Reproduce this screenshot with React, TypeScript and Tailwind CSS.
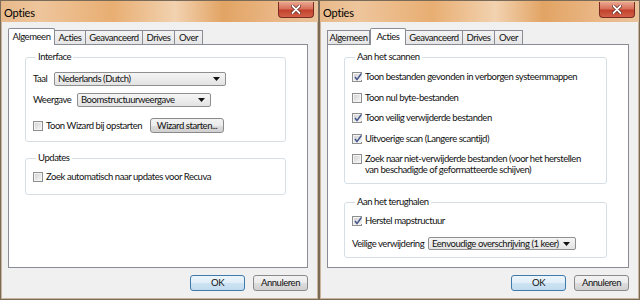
import React from "react";

function Check({ checked }: { checked?: boolean }) {
  return (
    <span className="w-[10px] h-[10px] shrink-0 border border-[#8e8f8f] bg-[#f4f4f4] p-px flex">
      <span className="flex-1 bg-[linear-gradient(135deg,#d4d4d4,#f4f4f4)] flex items-center justify-center">
        {checked && (
          <svg width="8" height="8" viewBox="0 0 8 8">
            <path d="M1 4 L3 6.6 L7.2 0.8" fill="none" stroke="#42548c" strokeWidth="1.5" />
          </svg>
        )}
      </span>
    </span>
  );
}

function Select({ value, className }: { value: string; className: string }) {
  return (
    <div
      className={`shrink-0 border border-[#8f8f8f] rounded-[2px] bg-[linear-gradient(#f5f5f5,#e3e3e3)] flex items-center justify-between pl-[3px] pr-[5px] ${className}`}
    >
      <span className="whitespace-nowrap">{value}</span>
      <svg width="7" height="4" viewBox="0 0 7 4">
        <path d="M0 0 H7 L3.5 4 Z" fill="#111" />
      </svg>
    </div>
  );
}

function Btn({ children, primary, className }: { children: React.ReactNode; primary?: boolean; className: string }) {
  return (
    <div
      className={`shrink-0 flex items-center justify-center rounded-[3px] border whitespace-nowrap ${
        primary
          ? "border-[#3d7bad] bg-[linear-gradient(#edf5fb_0%,#e1eef8_50%,#cde3f3_51%,#c2dbee_100%)]"
          : "border-[#8a8a8a] bg-[linear-gradient(#f3f3f3_0%,#ebebeb_50%,#dddddd_51%,#d0d0d0_100%)]"
      } ${className}`}
    >
      {children}
    </div>
  );
}

const tabBase: Record<string, string> = {
  Algemeen: "w-[43px]",
  Acties: "w-[32px]",
  Geavanceerd: "w-[58px]",
  Drives: "w-[33px]",
  Over: "w-[29px]",
};
const tabActive: Record<string, string> = {
  Algemeen: "w-[47px]",
  Acties: "w-[36px]",
  Geavanceerd: "w-[62px]",
  Drives: "w-[37px]",
  Over: "w-[33px]",
};

function Tabs({ active }: { active: string }) {
  return (
    <div className="h-[16px] flex items-end relative z-10">
      {Object.keys(tabBase).map((t) =>
        t === active ? (
          <div
            key={t}
            className={`${tabActive[t]} h-[17px] -mb-px bg-white border border-b-0 border-[#898c95] rounded-t-[2px] flex items-center justify-center pb-[1px]`}
          >
            {t}
          </div>
        ) : (
          <div
            key={t}
            className={`${tabBase[t]} h-[14px] bg-[linear-gradient(#f3f3f3,#e5e5e5)] border border-b-0 border-[#898c95] -ml-px first:ml-0 flex items-center justify-center`}
          >
            {t}
          </div>
        )
      )}
    </div>
  );
}

function Group({ label, children, className }: { label: string; children: React.ReactNode; className: string }) {
  return (
    <fieldset className={`border border-[#d5dfe5] rounded-[3px] px-[7px] ${className}`}>
      <legend className="ml-[3px] px-[2px] leading-[12px]">{label}</legend>
      {children}
    </fieldset>
  );
}

function Window({ active, children, className }: { active: string; children: React.ReactNode; className: string }) {
  return (
    <div
      className={`h-[300px] border border-[#7a6a58] flex flex-col bg-[linear-gradient(90deg,#e7b98a_0%,#eec59c_12%,#e8ae72_35%,#f2d2b0_55%,#e2a464_70%,#eab888_88%,#e9c39b_100%)] ${className}`}
    >
      <div className="h-[21px] shrink-0 relative flex items-center pl-[3px] pt-[3px] text-[11px] tracking-[-0.2px] text-black">
        Opties
        <div className="absolute right-[4px] top-[1px] w-[36px] h-[16px] rounded-b-[4px] border border-[#7a2a1e] border-t-0 bg-[linear-gradient(#e9a590_0%,#d8705a_45%,#c2422c_55%,#d2614a_100%)] flex items-center justify-center">
          <svg width="10" height="9" viewBox="0 0 10 9">
            <path d="M1.5 1 L8.5 8 M8.5 1 L1.5 8" stroke="#5a2018" strokeWidth="3.2" strokeLinecap="round" />
            <path d="M1.5 1 L8.5 8 M8.5 1 L1.5 8" stroke="#ffffff" strokeWidth="1.8" strokeLinecap="round" />
          </svg>
        </div>
      </div>
      <div className="flex-1 bg-[#f0f0f0] border border-[#c9b39a] border-t-0 flex flex-col pt-[6px] pl-[6px] pr-[9px] pb-[5px]">
        <Tabs active={active} />
        <div className="h-[224px] bg-white border border-[#898c95] flex flex-col pt-[6px] pl-[16px] pr-[21px]">
          {children}
        </div>
        <div className="mt-[7px] flex justify-end gap-[8px]">
          <Btn primary className="w-[55px] h-[16px]">OK</Btn>
          <Btn className="w-[55px] h-[16px]">Annuleren</Btn>
        </div>
      </div>
    </div>
  );
}

function Row({ checked, children, className }: { checked?: boolean; children: React.ReactNode; className?: string }) {
  return (
    <div className={`flex items-center gap-[3px] h-[12px] ${className ?? ""}`}>
      <Check checked={checked} />
      <span className="whitespace-nowrap">{children}</span>
    </div>
  );
}

export default function App() {
  return (
    <div className="w-[640px] h-[300px] flex bg-[#2a2a2a] font-['Lato',sans-serif] text-[9.5px] leading-[12px] tracking-[-0.45px] text-[#111]">
      <Window active="Algemeen" className="w-[319px]">
        <Group label="Interface" className="pb-[8px]">
          <div className="mt-[9px] flex items-center h-[14px]">
            <span className="w-[21px] shrink-0">Taal</span>
            <Select value="Nederlands (Dutch)" className="w-[172px] h-[14px]" />
          </div>
          <div className="mt-[7px] flex items-center h-[14px]">
            <span className="w-[44px] shrink-0">Weergave</span>
            <Select value="Boomstructuurweergave" className="w-[134px] h-[14px]" />
          </div>
          <div className="mt-[11px] flex items-center h-[15px]">
            <Row>Toon Wizard bij opstarten</Row>
            <Btn className="ml-[8px] w-[74px] h-[15px]">Wizard starten...</Btn>
          </div>
        </Group>
        <Group label="Updates" className="mt-[10px] pb-[11px]">
          <Row className="mt-[7px]">Zoek automatisch naar updates voor Recuva</Row>
        </Group>
      </Window>
      <Window active="Acties" className="w-[321px]">
        <Group label="Aan het scannen" className="pb-[8px]">
          <div className="mt-[8px] flex flex-col gap-[8.5px]">
            <Row checked>Toon bestanden gevonden in verborgen systeemmappen</Row>
            <Row>Toon nul byte-bestanden</Row>
            <Row checked>Toon veilig verwijderde bestanden</Row>
            <Row checked>Uitvoerige scan (Langere scantijd)</Row>
            <div className="flex items-start gap-[3px] leading-[11px]">
              <span className="mt-[1px]">
                <Check />
              </span>
              <span className="whitespace-nowrap">
                Zoek naar niet-verwijderde bestanden (voor het herstellen
                <br />
                van beschadigde of geformatteerde schijven)
              </span>
            </div>
          </div>
        </Group>
        <Group label="Aan het terughalen" className="mt-[12px] pb-[7px]">
          <Row checked className="mt-[7px]">Herstel mapstructuur</Row>
          <div className="mt-[10px] flex items-center h-[13px]">
            <span className="w-[76px] shrink-0 whitespace-nowrap">Veilige verwijdering</span>
            <Select value="Eenvoudige overschrijving (1 keer)" className="w-[148px] h-[13px]" />
          </div>
        </Group>
      </Window>
    </div>
  );
}
